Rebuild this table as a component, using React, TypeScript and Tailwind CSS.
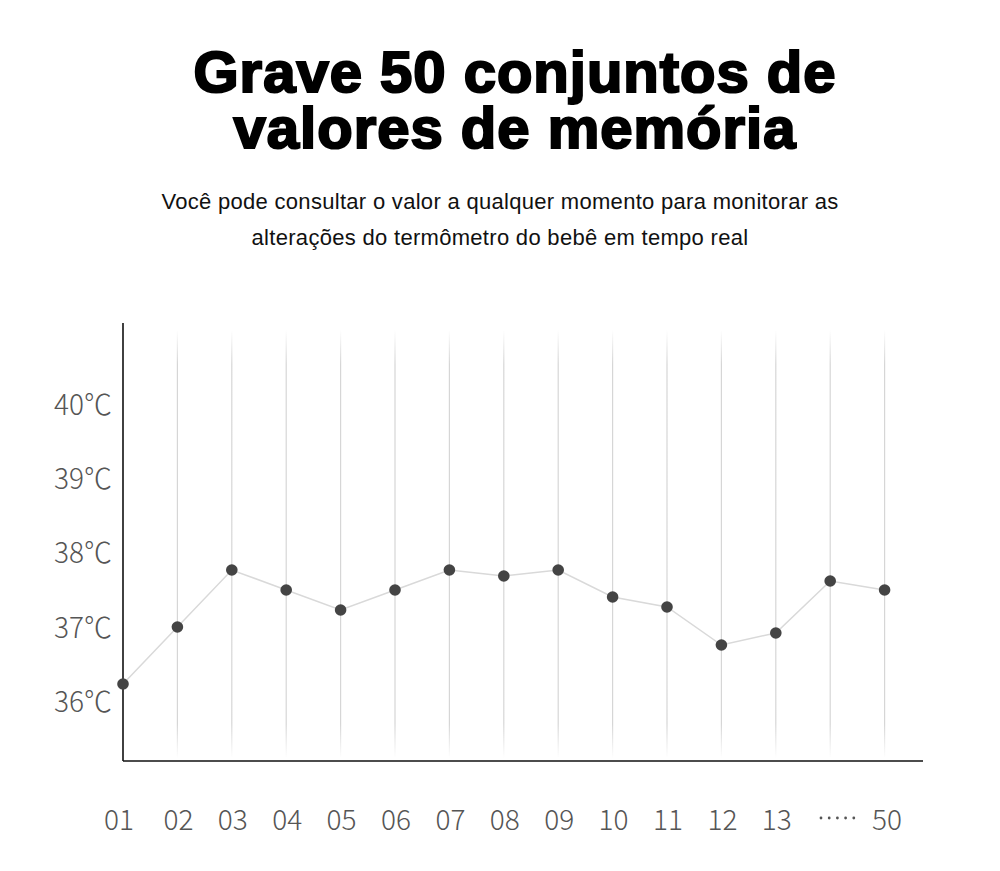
import React from "react";

const step = 54.4;
const x0 = 123;

const points = [684, 627, 570, 590, 610, 590, 570, 576, 570, 597, 607, 645, 633, 581, 590];

const xLabels = ["01", "02", "03", "04", "05", "06", "07", "08", "09", "10", "11", "12", "13", "", "50"];

const yLabels = [
  { t: "40℃", y: 415 },
  { t: "39℃", y: 489 },
  { t: "38℃", y: 563 },
  { t: "37℃", y: 638 },
  { t: "36℃", y: 712 },
];

function MemoryChart() {
  const xs = points.map((_, i) => x0 + step * i);
  const line = points.map((y, i) => `${xs[i]},${y}`).join(" ");

  return (
    <svg
      className="block w-[1000px] h-[571px] mt-[44px]"
      viewBox="0 300 1000 571"
      style={{ fontFamily: '"Noto Sans CJK SC", "Liberation Sans", sans-serif' }}
    >
      <defs>
        <linearGradient id="grid" x1="0" y1="0" x2="0" y2="1">
          <stop offset="0" stopColor="#d6d6d6" stopOpacity="0" />
          <stop offset="0.08" stopColor="#d6d6d6" stopOpacity="1" />
          <stop offset="0.92" stopColor="#d6d6d6" stopOpacity="1" />
          <stop offset="1" stopColor="#d6d6d6" stopOpacity="0" />
        </linearGradient>
      </defs>

      {/* vertical grid */}
      {xs.slice(1).map((x, i) => (
        <rect key={i} x={x - 0.6} y={330} width={1.2} height={428} fill="url(#grid)" />
      ))}

      {/* axes */}
      <line x1={x0} y1={323} x2={x0} y2={761} stroke="#111" strokeWidth={1.6} />
      <line x1={x0} y1={761} x2={923} y2={761} stroke="#111" strokeWidth={1.6} />

      <polyline points={line} fill="none" stroke="#d9d9d9" strokeWidth={1.5} />
      {points.map((y, i) => (
        <circle key={i} cx={xs[i]} cy={y} r={5.8} fill="#444" />
      ))}

      {yLabels.map((l) => (
        <text key={l.t} x={112} y={l.y} textAnchor="end" fontSize={28} fontWeight={300} fill="#555">
          {l.t}
        </text>
      ))}

      {xLabels.map((t, i) =>
        t ? (
          <text
            key={i}
            x={i === 0 ? 119 : i === 14 ? 887 : xs[i] + 1}
            y={830}
            textAnchor="middle"
            fontSize={28}
            fontWeight={300}
            fill="#555"
          >
            {t}
          </text>
        ) : null
      )}
      {[0, 1, 2, 3, 4].map((k) => (
        <circle key={k} cx={821 + k * 8.2} cy={818} r={1.4} fill="#555" />
      ))}
    </svg>
  );
}

export default function App() {
  return (
    <div className="w-[1000px] h-[871px] bg-white overflow-hidden">
      <h1 className="pt-[44px] pl-[30px] text-center text-[58px] leading-[56px] font-black text-black tracking-[1px] font-['Liberation_Sans',Arial,sans-serif] [-webkit-text-stroke:2.2px_black]">
        Grave 50 conjuntos de
        <br />
        valores de memória
      </h1>
      <p className="mt-[28px] text-center text-[22px] leading-[36px] tracking-[0.3px] text-[#111] font-['Liberation_Sans',Arial,sans-serif]">
        Você pode consultar o valor a qualquer momento para monitorar as
        <br />
        alterações do termômetro do bebê em tempo real
      </p>
      <MemoryChart />
    </div>
  );
}
